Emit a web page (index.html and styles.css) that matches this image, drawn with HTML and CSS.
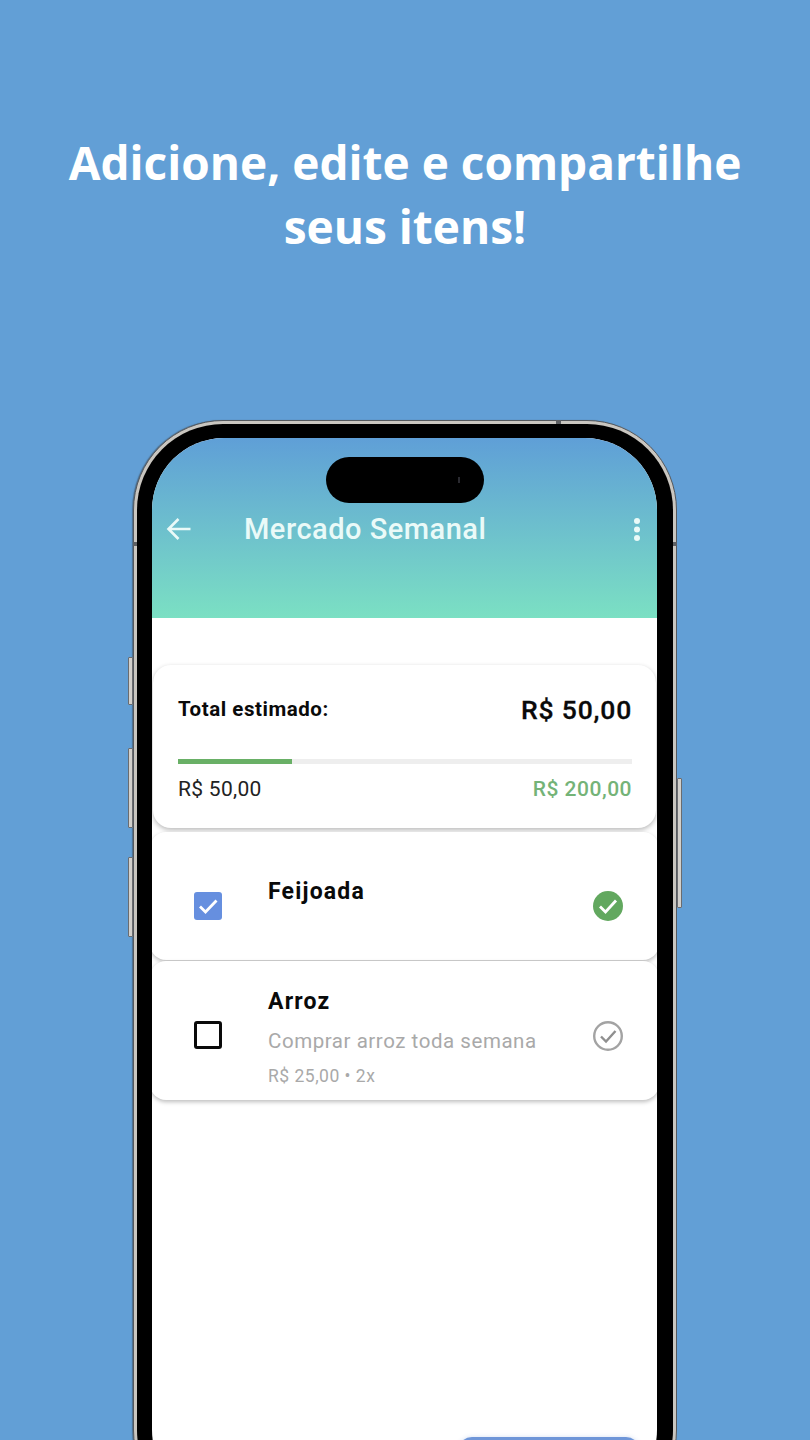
FILE: index.html
```html
<!DOCTYPE html>
<html lang="pt-br">
<head>
    <meta charset="UTF-8">
    <meta name="viewport" content="width=device-width, initial-scale=1.0">
    <title>Mercado Semanal</title>
    <link rel="stylesheet" href="styles.css">
</head>
<body>
    <h1 class="titulo">Adicione, edite e compartilhe<br>seus itens!</h1>

    <div class="celular">
        <span class="botao botao-mudo"></span>
        <span class="botao botao-mais"></span>
        <span class="botao botao-menos"></span>
        <span class="botao botao-power"></span>
        <span class="antena antena-esq"></span>
        <span class="antena antena-dir"></span>
        <span class="antena-topo"></span>

        <div class="moldura">
            <div class="tela">
                <div class="ilha"><span class="camera"></span></div>

                <header class="topo">
                    <svg class="voltar" viewBox="0 0 26 24" width="26" height="24">
                        <path d="M24.5 12H2.5M12.5 2L2.5 12l10 10" fill="none" stroke="#eafaf8" stroke-width="2.6"/>
                    </svg>
                    <h2 class="topo-titulo">Mercado Semanal</h2>
                    <svg class="mais" viewBox="0 0 6 23" width="6" height="23">
                        <circle cx="3" cy="3" r="3" fill="#eafaf8"/>
                        <circle cx="3" cy="11.5" r="3" fill="#eafaf8"/>
                        <circle cx="3" cy="20" r="3" fill="#eafaf8"/>
                    </svg>
                </header>

                <section class="resumo">
                    <div class="resumo-linha">
                        <span class="resumo-label">Total estimado:</span>
                        <span class="resumo-total">R$ 50,00</span>
                    </div>
                    <div class="barra"><div class="barra-cheia" style="width: 25%"></div></div>
                    <div class="valores">
                        <span>R$ 50,00</span>
                        <span class="valor-meta">R$ 200,00</span>
                    </div>
                </section>

                <div class="item item-feito">
                    <span class="caixa caixa-marcada">
                        <svg viewBox="0 0 28 28" width="28" height="28">
                            <path d="M6 14.5l5.5 5.5L22.500 8.500" fill="none" stroke="#fff" stroke-width="2.800"/>
                        </svg>
                    </span>
                    <div class="item-texto">
                        <p class="item-nome">Feijoada</p>
                    </div>
                    <svg class="status" viewBox="0 0 30 30" width="30" height="30">
                        <circle cx="15" cy="15" r="15" fill="#62a85f"/>
                        <path d="M7 15.5l5.5 5.500L23 9.500" fill="none" stroke="#fff" stroke-width="2.800"/>
                    </svg>
                </div>

                <div class="item">
                    <span class="caixa"></span>
                    <div class="item-texto">
                        <p class="item-nome">Arroz</p>
                        <p class="item-desc">Comprar arroz toda semana</p>
                        <p class="item-info">R$ 25,00 • 2x</p>
                    </div>
                    <svg class="status" viewBox="0 0 30 30" width="30" height="30">
                        <circle cx="15" cy="15" r="13.8" fill="none" stroke="#a3a3a3" stroke-width="2.4"/>
                        <path d="M8 15.5l5 5L22.5 10" fill="none" stroke="#8f8f8f" stroke-width="2.4"/>
                    </svg>
                </div>

                <div class="fab"></div>
            </div>
        </div>
    </div>
</body>
</html>
```

FILE: styles.css
```css
* {
    margin: 0;
    padding: 0;
    box-sizing: border-box;
}

html, body {
    height: 1440px;
    overflow: hidden;
}

body {
    background-color: #629fd6;
    font-family: Roboto, Arial, sans-serif;
    color: #0a0a0a;
}

.titulo {
    padding-top: 130px;
    text-align: center;
    font-family: "Open Sans", Arial, sans-serif;
    font-size: 46px;
    font-weight: 700;
    line-height: 64px;
    color: #fff;
}

/* aparelho */
.celular {
    position: relative;
    width: 544px;
    height: 1100px;
    margin: 162px 0 0 133px;
    padding: 3px;
    background-color: #c9c6c0;
    border: 1px solid #55595e;
    border-radius: 90px;
    box-shadow: -1px 0 1px rgba(60, 75, 90, 0.6);
}

.moldura {
    height: 100%;
    padding: 14px 16px 14px 15px;
    background-color: #000;
    border-radius: 86px;
}

.tela {
    position: relative;
    height: 100%;
    background-color: #fff;
    border-radius: 72px;
    overflow: hidden;
}

.botao {
    position: absolute;
    width: 5px;
    background-color: #d2d0cc;
    border: 1px solid #6a6c70;
    border-radius: 1px;
}

.botao-mudo { left: -6px; top: 236px; height: 48px; }
.botao-mais { left: -6px; top: 327px; height: 80px; }
.botao-menos { left: -6px; top: 436px; height: 80px; }
.botao-power { right: -6px; top: 357px; height: 130px; }

.antena {
    position: absolute;
    top: 121px;
    width: 4px;
    height: 4px;
    background-color: #5d5f62;
}

.antena-esq { left: -1px; }
.antena-dir { right: -1px; }

.antena-topo {
    position: absolute;
    top: -1px;
    left: 422px;
    width: 5px;
    height: 4px;
    background-color: #5d5f62;
}

.ilha {
    position: absolute;
    top: 19px;
    left: 174px;
    width: 158px;
    height: 46px;
    background-color: #000;
    border-radius: 23px;
}

.camera {
    position: absolute;
    top: 20px;
    right: 24px;
    width: 2px;
    height: 6px;
    background-color: #2a2a30;
}

/* topo do app */
.topo {
    height: 180px;
    padding: 74px 17px 0 14px;
    display: flex;
    align-items: flex-start;
    background: linear-gradient(#5f9fd7, #7be0c3);
}

.voltar {
    margin-top: 5px;
}

.topo-titulo {
    flex: 1;
    margin-left: 52px;
    font-size: 29px;
    font-weight: 500;
    line-height: 34px;
    letter-spacing: 0.5px;
    color: #eafaf8;
}

.mais {
    margin-top: 6px;
}

/* resumo */
.resumo {
    margin: 47px 1px 0;
    padding: 28px 24px 27px 25px;
    background-color: #fff;
    border-radius: 18px;
    box-shadow: 0 2px 5px rgba(0, 0, 0, 0.28);
}

.resumo-linha {
    display: flex;
    justify-content: space-between;
    align-items: center;
    height: 32px;
}

.resumo-label {
    font-size: 20.5px;
    font-weight: 700;
    letter-spacing: 0.55px;
}

.resumo-total {
    font-size: 26.5px;
    font-weight: 500;
    letter-spacing: 0.8px;
    -webkit-text-stroke: 0.3px #0a0a0a;
}

.barra {
    height: 5px;
    margin-top: 34px;
    background-color: #eeeeee;
}

.barra-cheia {
    height: 100%;
    background-color: #69b066;
}

.valores {
    display: flex;
    justify-content: space-between;
    margin-top: 13px;
    font-size: 21px;
    line-height: 24px;
    letter-spacing: 0.3px;
    color: #222;
}

.valor-meta {
    font-weight: 500;
    letter-spacing: 0.5px;
    color: #74b377;
}

/* itens */
.item {
    display: flex;
    align-items: center;
    height: 139px;
    margin: 0 -2px;
    padding: 0 36px 0 44px;
    background-color: #fff;
    border-radius: 16px;
    box-shadow: 0 2px 4px rgba(0, 0, 0, 0.26);
}

.item-feito {
    height: 128px;
    margin-top: 4px;
    margin-bottom: 1px;
}

.caixa {
    flex: none;
    width: 28px;
    height: 28px;
    margin-top: 8px;
    border: 3px solid #0a0a0a;
    border-radius: 3px;
}

.caixa-marcada {
    border: none;
    background-color: #668fdf;
    margin-top: 20px;
}

.caixa-marcada svg {
    display: block;
}

.item-texto {
    flex: 1;
    align-self: flex-start;
    margin-left: 46px;
    padding-top: 26px;
}

.item-feito .item-texto {
    padding-top: 45px;
}

.item-nome {
    font-size: 23px;
    font-weight: 700;
    line-height: 30px;
    letter-spacing: 1.2px;
}

.item-desc {
    margin-top: 9px;
    font-size: 20.5px;
    line-height: 30px;
    letter-spacing: 0.55px;
    color: #a9a9a9;
}

.item-info {
    margin-top: 8px;
    font-size: 17.5px;
    line-height: 24px;
    letter-spacing: 0.5px;
    color: #a9a9a9;
}

.status {
    flex: none;
    margin-top: 10px;
}

.item-feito .status {
    margin-top: 20px;
}

.fab {
    position: absolute;
    top: 999px;
    left: 306px;
    width: 182px;
    height: 60px;
    background-color: #6f96d8;
    border-radius: 14px;
    box-shadow: 0 0 4px rgba(111, 150, 216, 0.3);
}
```
